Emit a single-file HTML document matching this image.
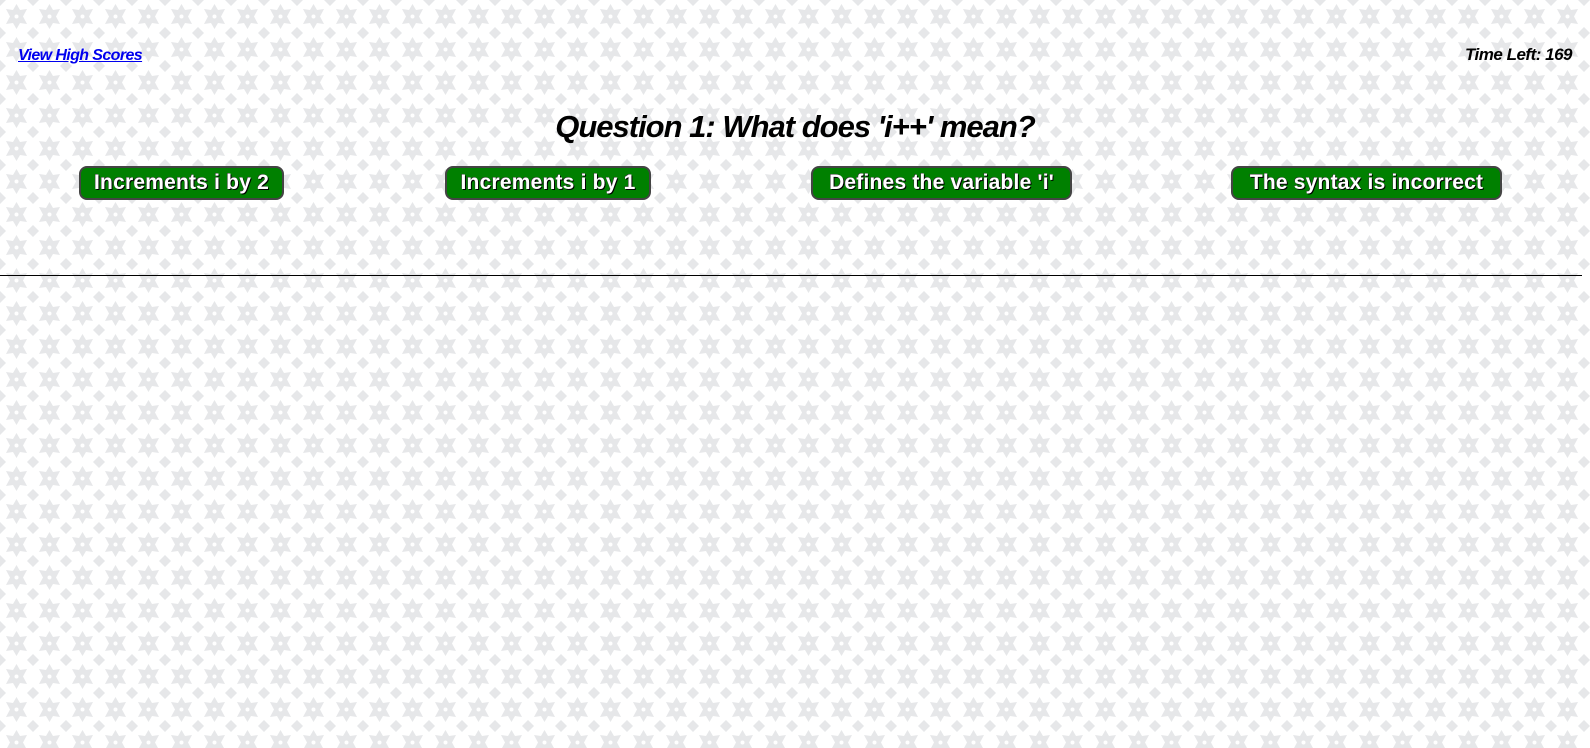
<!DOCTYPE html>
<html><head><meta charset="utf-8"><style>
html,body{margin:0;padding:0;width:1590px;height:748px;overflow:hidden;}
body{position:relative;font-family:"Liberation Sans",sans-serif;background:#f3f3f4;}
svg.bg{position:absolute;left:0;top:0;}
.link{position:absolute;left:18px;top:47px;font-size:16px;font-weight:bold;font-style:italic;color:#0000ee;text-decoration:underline;letter-spacing:-0.6px}
.time{position:absolute;right:18px;top:45px;font-size:17px;font-weight:bold;font-style:italic;color:#000;letter-spacing:-0.5px}
h1{position:absolute;left:0;width:1590px;top:109px;margin:0;text-align:center;font-size:31px;font-style:italic;font-weight:bold;letter-spacing:-1px}
.btn{position:absolute;top:166px;height:30px;background:#008000;border:2px solid #444;border-radius:8px;color:#fff;font-weight:bold;font-size:21px;line-height:30px;text-align:center;letter-spacing:0.2px;text-shadow:1px 1px 0 #000,-0.5px -0.5px 0 #333;white-space:nowrap}
.hr{position:absolute;left:0;top:275px;width:1582px;height:1px;background:#000}
</style></head><body>
<svg class="bg" width="1590" height="748"><defs><pattern id="p" width="33" height="33" patternUnits="userSpaceOnUse">
<rect width="33" height="33" fill="#fff"/>
<g fill="#e6e7e9">
<path d="M16.5 4 L20 10 L27 9 L23 16.5 L27 24 L20 23 L16.5 29 L13 23 L6 24 L10 16.5 L6 9 L13 10Z"/>
<path d="M0 -6 L4 -2 L6 0 L4 2 L0 6 L-4 2 L-6 0 L-4 -2Z"/>
<path d="M33 -6 L37 -2 L39 0 L37 2 L33 6 L29 2 L27 0 L29 -2Z"/>
<path d="M0 27 L4 31 L6 33 L4 35 L0 39 L-4 35 L-6 33 L-4 31Z"/>
<path d="M33 27 L37 31 L39 33 L37 35 L33 39 L29 35 L27 33 L29 31Z"/>
</g><circle cx="16.5" cy="16.5" r="2" fill="#fff"/></pattern></defs>
<rect width="1590" height="748" fill="url(#p)"/></svg>
<div class="link">View High Scores</div>
<div class="time">Time Left: 169</div>
<h1>Question 1: What does 'i++' mean?</h1>
<div class="btn" style="left:79px;width:201px">Increments i by 2</div>
<div class="btn" style="left:445px;width:202px">Increments i by 1</div>
<div class="btn" style="left:811px;width:257px">Defines the variable 'i'</div>
<div class="btn" style="left:1231px;width:267px">The syntax is incorrect</div>
<div class="hr"></div>
</body></html>
